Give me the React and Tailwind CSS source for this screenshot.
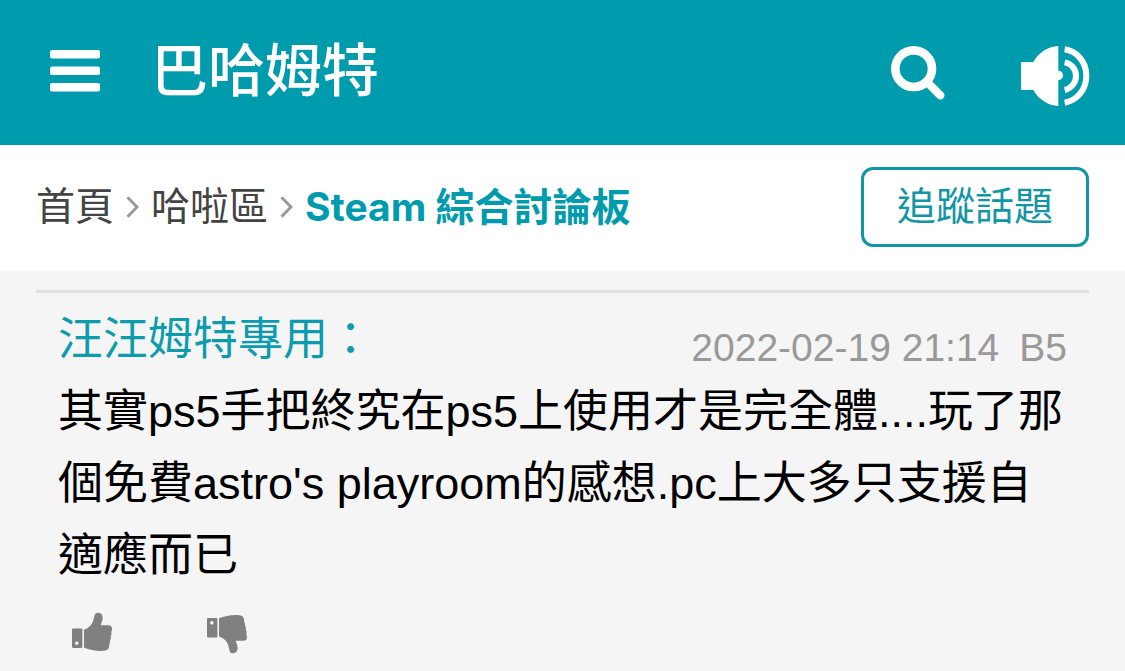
import React, { useState } from 'react';

const ChevronIcon = () => (
  <svg className="w-[13px] h-[22px] text-[#999999] shrink-0" viewBox="0 0 13 22" fill="none" stroke="currentColor" strokeWidth="3" aria-hidden="true">
    <path d="M1.5 1.2 L11 11 L1.5 20.8" />
  </svg>
);

const MenuIcon = () => (
  <svg className="w-[50px] h-[42px]" viewBox="0 0 50 42" fill="currentColor" aria-hidden="true">
    <rect x="0" y="0" width="50" height="8.5" rx="2" />
    <rect x="0" y="16.5" width="50" height="8.5" rx="2" />
    <rect x="0" y="33" width="50" height="8.5" rx="2" />
  </svg>
);

const SearchIcon = () => (
  <svg className="w-[54px] h-[54px]" viewBox="0 0 162 162" fill="none" stroke="currentColor" aria-hidden="true">
    <circle cx="68" cy="68" r="55" strokeWidth="26" />
    <path d="M107 107 L148 148" strokeWidth="25" strokeLinecap="round" />
  </svg>
);

const SoundIcon = () => (
  <svg className="w-[70px] h-[60px]" viewBox="0 0 210 180" fill="none" stroke="currentColor" aria-hidden="true">
    <path d="M3 51 Q3 48 6 48 H40 C55 20 85 1 115 0 V180 C85 179 55 160 40 132 H6 Q3 132 3 129 Z" fill="currentColor" stroke="none" />
    <circle cx="115" cy="88" r="14" fill="currentColor" stroke="none" />
    <path d="M134 10 C171 15 199 48 199 89 C199 131 171 164 134 170" strokeWidth="18" />
    <path d="M134 49 C154 53 168 69 168 90 C168 110 154 127 134 132" strokeWidth="18" />
  </svg>
);

const ThumbIcon = ({ down }) => (
  <svg className={`w-10 h-10 ${down ? '-scale-y-100' : ''}`} viewBox="0 0 40 40" fill="currentColor" aria-hidden="true">
    <path
      fillRule="evenodd"
      d="M1.2 16.4 H9.3 Q10.4 16.4 10.4 17.5 V34.8 Q10.4 35.9 9.3 35.9 H1.2 Q0 35.9 0 34.8 V17.5 Q0 16.4 1.2 16.4 Z M4.8 29.5 a1.7 1.7 0 1 0 0.01 0 Z"
    />
    <path d="M12 17.8 C15.5 16.4 18 14.6 19.7 12 C21.5 9.2 21.9 5.8 22.6 3.2 C23.2 1 25 0.3 27 0.8 C29.8 1.5 31 4 30.6 7 C30.3 9.3 29.2 11.2 28.7 13.3 H36.5 C39 13.3 40.3 15.2 40 17.2 C39.8 18.6 39.3 19.3 39.3 20.2 C39.8 21.5 39.5 23 38.8 24.2 C39.2 25.7 38.8 27.2 37.9 28.4 C38.3 29.8 38 31.2 37.2 32.3 C37.4 35.8 36 38.2 33.5 38.6 C25.5 39.8 18.5 37.8 12 35.8 Z" />
  </svg>
);

const comment = {
  author: '汪汪姆特專用',
  time: '2022-02-19 21:14',
  floor: 'B5',
  text: "其實ps5手把終究在ps5上使用才是完全體....玩了那個免費astro's playroom的感想.pc上大多只支援自適應而已",
};

const App = () => {
  const [vote, setVote] = useState(null);

  return (
    <div lang="zh-Hant" className="min-h-screen flex flex-col bg-[#f5f5f5] text-black font-['Liberation_Sans','Noto_Sans_CJK_TC',sans-serif]">
      <header className="h-[145px] bg-[#009cae] text-white flex items-center justify-between pl-[50px] pr-[35px]">
        <div className="flex items-center gap-[51px] pb-1">
          <button type="button" aria-label="選單"><MenuIcon /></button>
          <a href="#" className="text-[57px] leading-[72px] font-medium">巴哈姆特</a>
        </div>
        <div className="flex items-start gap-[75px] pt-[6px]">
          <button type="button" aria-label="搜尋"><SearchIcon /></button>
          <button type="button" aria-label="聲音"><SoundIcon /></button>
        </div>
      </header>

      <div className="h-[126px] bg-white flex items-center justify-between px-9 pb-[2px]">
        <nav className="flex items-center gap-3 text-[39px] leading-[56px] text-[#444444]">
          <a href="#">首頁</a>
          <ChevronIcon />
          <a href="#">哈啦區</a>
          <ChevronIcon />
          <a href="#" className="font-bold text-[#009cae] font-['Inter','Noto_Sans_CJK_TC',sans-serif]">Steam 綜合討論板</a>
        </nav>
        <button type="button" className="px-[33px] py-[9px] border-[3px] border-[#1196a5] rounded-xl text-[39px] leading-[56px] text-[#1196a5]">
          追蹤話題
        </button>
      </div>

      <main className="px-9 pt-[19px]">
        <article className="border-t-[3px] border-[#e1e1e1] px-[22px] pt-[11px]">
          <div className="flex items-end justify-between">
            <a href="#" className="text-[45px] leading-[72px] text-[#0d9cad]">{comment.author}：</a>
            <div className="flex gap-5 text-[39px] leading-[56px] text-[#999999]">
              <time>{comment.time}</time>
              <span>{comment.floor}</span>
            </div>
          </div>
          <p className="text-[45px] leading-[72px]">{comment.text}</p>
          <div className="flex items-start gap-[95px] px-[14px] pt-[20px] text-[#808080]">
            <button type="button" aria-label="推" aria-pressed={vote === 'up'} onClick={() => setVote('up')}>
              <ThumbIcon />
            </button>
            <button type="button" aria-label="噓" aria-pressed={vote === 'down'} onClick={() => setVote('down')} className="pt-[2px]">
              <ThumbIcon down />
            </button>
          </div>
        </article>
      </main>
    </div>
  );
};

export default App;
